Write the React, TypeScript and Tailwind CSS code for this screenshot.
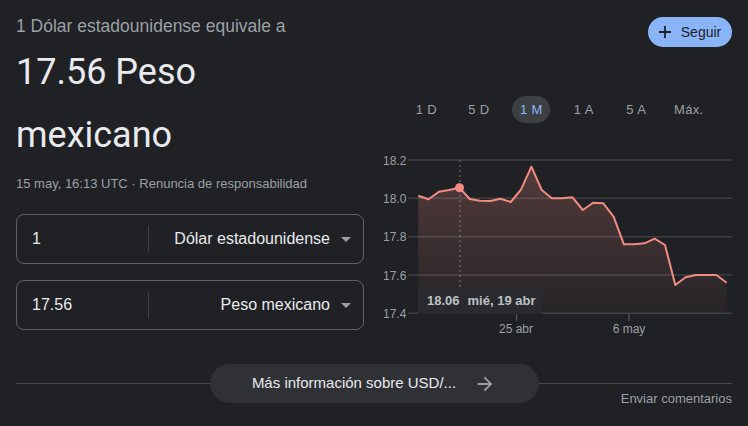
import React from 'react';

const sans = "font-['Liberation_Sans',Arial,sans-serif]";

// Closing rates, one per trading day (plotted in px, already scaled)
const rateYs = [
  195.7, 199.3, 191.7, 190, 187.7, 199, 200.7, 201, 198.7, 202, 189.3, 166.7, 190, 198.3, 198.3, 197.3,
  210, 202.7, 203.3, 216.7, 244.3, 244.3, 243.3, 238.7, 245, 285, 277.3, 275, 275, 275, 282.7,
];

const ranges = ['1 D', '5 D', '1 M', '1 A', '5 A', 'Máx.'];

const gridLines = [
  { label: '18.2', y: 12 },
  { label: '18.0', y: 50.3 },
  { label: '17.8', y: 88.7 },
  { label: '17.6', y: 127 },
  { label: '17.4', y: 165.3 },
];

const Caret = () => (
  <svg width="24" height="24" viewBox="0 0 24 24" className="ml-1 shrink-0">
    <path d="M7 10l5 5 5-5z" fill="#9aa0a6" />
  </svg>
);

const CurrencyBox = ({ amount, currency }: { amount: string; currency: string }) => (
  <div className="flex h-[50px] items-center rounded-lg border border-[#5f6368]">
    <div className="w-[131px] pl-[15px] text-base text-[#e8eaed]">{amount}</div>
    <div className="h-[26px] w-px bg-[#3c4043]" />
    <div className="flex flex-1 items-center justify-end pr-[5px] text-base text-[#e8eaed]">
      <span>{currency}</span>
      <Caret />
    </div>
  </div>
);

const RateChart = () => {
  const pts = rateYs.map((y, i) => [48.3 + i * 10.28, y - 148] as const);
  const line = pts.map(([x, y], i) => `${i ? 'L' : 'M'}${x.toFixed(1)} ${y.toFixed(1)}`).join(' ');
  const area = `${line} L${pts[pts.length - 1][0].toFixed(1)} 165.3 L${pts[0][0].toFixed(1)} 165.3 Z`;

  return (
    <div className="relative mt-[25px] h-[190px] w-[362px]">
      <svg width="362" height="190" viewBox="0 0 362 190" className="block">
        <defs>
          <linearGradient id="rateFill" x1="0" y1="0" x2="0" y2="1">
            <stop offset="0" stopColor="#f28b82" stopOpacity="0.24" />
            <stop offset="1" stopColor="#f28b82" stopOpacity="0.03" />
          </linearGradient>
        </defs>
        {gridLines.map((g) => (
          <g key={g.label}>
            <line x1="38" x2="362" y1={g.y} y2={g.y} stroke="#3c4043" strokeWidth="1.5" />
            <text x="13" y={g.y + 4.5} fontSize="12" fill="#9aa0a6" fontFamily="Liberation Sans, Arial, sans-serif">
              {g.label}
            </text>
          </g>
        ))}
        <path d={area} fill="url(#rateFill)" />
        <line x1="90" x2="90" y1="12" y2="139" stroke="#9aa0a6" strokeWidth="1" strokeDasharray="2 3" opacity="0.7" />
        <path d={line} fill="none" stroke="#f28b82" strokeWidth="2" strokeLinejoin="round" />
        <circle cx="89.5" cy="39.7" r="4.5" fill="#f28b82" />
        <line x1="146.7" x2="146.7" y1="166" y2="173" stroke="#5f6368" />
        <line x1="259" x2="259" y1="166" y2="173" stroke="#5f6368" />
        <text x="146" y="184.5" fontSize="12" fill="#9aa0a6" textAnchor="middle" fontFamily="Liberation Sans, Arial, sans-serif">
          25 abr
        </text>
        <text x="259" y="184.5" fontSize="12" fill="#9aa0a6" textAnchor="middle" fontFamily="Liberation Sans, Arial, sans-serif">
          6 may
        </text>
      </svg>
      {/* hover tooltip */}
      <div className="absolute left-[48px] top-[139px] flex h-[27px] w-[124px] items-center gap-2 bg-[#292a2d] pl-[9px] text-[13px] font-bold text-[#bdc1c6]">
        <span>18.06</span>
        <span>mié, 19 abr</span>
      </div>
    </div>
  );
};

export default function App() {
  return (
    <div className={`h-[426px] w-[748px] overflow-hidden bg-[#202124] px-4 ${sans}`}>
      <div className="flex h-[364px] items-start">
        {/* converter */}
        <div className="w-[348px]">
          <div className="mt-[14px] text-[17.5px] leading-6 text-[#9aa0a6]">1 Dólar estadounidense equivale a</div>
          <div className="mt-[3px] font-['Roboto',sans-serif] text-[36px] leading-[63px] text-[#e8eaed]">
            17.56 Peso
            <br />
            mexicano
          </div>
          <div className="mt-[9px] text-[13px] leading-4 text-[#9aa0a6]">
            15 may, 16:13 UTC · <span>Renuncia de responsabilidad</span>
          </div>
          <div className="mt-[22px] flex flex-col gap-4">
            <CurrencyBox amount="1" currency="Dólar estadounidense" />
            <CurrencyBox amount="17.56" currency="Peso mexicano" />
          </div>
        </div>

        {/* chart side */}
        <div className="ml-[6px] flex flex-1 flex-col">
          <div className="mt-[17px] flex justify-end">
            <button className="flex h-[30px] w-[84px] items-center justify-center gap-2.5 rounded-full bg-[#8ab4f8] text-sm text-[#202124]">
              <svg width="12" height="12" viewBox="0 0 12 12">
                <path d="M6 0v12M0 6h12" stroke="#202124" strokeWidth="1.8" />
              </svg>
              <span>Seguir</span>
            </button>
          </div>
          <div className="ml-[30px] mt-[49px] grid w-[315px] grid-cols-6">
            {ranges.map((r) => (
              <div key={r} className="flex justify-center">
                <div
                  className={
                    r === '1 M'
                      ? 'flex h-[27px] w-[38px] items-center justify-center rounded-full bg-[#3c4043] text-[13px] tracking-wide text-[#8ab4f8]'
                      : 'flex h-[27px] items-center justify-center text-[13px] tracking-wide text-[#9aa0a6]'
                  }
                >
                  {r}
                </div>
              </div>
            ))}
          </div>
          <RateChart />
        </div>
      </div>

      {/* more info */}
      <div className="flex h-[39px] items-center">
        <div className="h-[1.5px] flex-1 bg-[#46494d]" />
        <div className="flex h-[39px] w-[329px] items-center justify-center gap-[18px] rounded-full bg-[#303134]">
          <span className="text-[15px] text-[#e8eaed]">Más información sobre USD/...</span>
          <svg width="22" height="22" viewBox="0 0 24 24">
            <path d="M12 4l-1.41 1.41L16.17 11H4v2h12.17l-5.58 5.59L12 20l8-8z" fill="#9aa0a6" />
          </svg>
        </div>
        <div className="h-[1.5px] flex-1 bg-[#46494d]" />
      </div>
      <div className="-mt-3 flex justify-end">
        <span className="text-[13px] leading-4 text-[#9aa0a6]">Enviar comentarios</span>
      </div>
    </div>
  );
}
